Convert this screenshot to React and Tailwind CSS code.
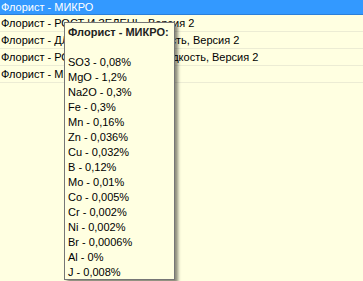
export default function App() {
  const rows = [
    "Флорист - РОСТ И ЗЕЛЕНЬ, Версия 2",
    "Флорист - ДЛЯ ЗЕЛЁНЫХ, жидкость, Версия 2",
    "Флорист - РОЗЫ И ГЕРБЕРЫ, жидкость, Версия 2",
    "Флорист - МИКРО, Версия 2",
  ];
  const items = [
    "SO3 - 0,08%",
    "MgO - 1,2%",
    "Na2O - 0,3%",
    "Fe - 0,3%",
    "Mn - 0,16%",
    "Zn - 0,036%",
    "Cu - 0,032%",
    "B - 0,12%",
    "Mo - 0,01%",
    "Co - 0,005%",
    "Cr - 0,002%",
    "Ni - 0,002%",
    "Br - 0,0006%",
    "Al - 0%",
    "J - 0,008%",
  ];
  return (
    <div
      className="relative w-[363px] h-[281px] overflow-hidden bg-[#ffffe1] text-[11px] text-black"
      style={{ fontFamily: '"Liberation Sans", Arial, sans-serif' }}
    >
      <div className="h-[15px] bg-[#3399ff] border-b border-[#2b7fd9] text-white pl-px leading-[14px] whitespace-nowrap">
        Флорист - МИКРО
      </div>
      {rows.map((r, i) => (
        <div
          key={i}
          className="h-[17px] border-b border-[#ececd4] pl-px leading-[16px] whitespace-nowrap"
        >
          {r}
        </div>
      ))}
      <div className="absolute left-[64px] top-[22px] w-[111px] h-[258px] bg-[#ffffe1] border border-[#767676] shadow-[3px_3px_3px_rgba(0,0,0,0.45)] pl-[3px] pt-[2px] text-[#000] leading-[15px] whitespace-nowrap">
        <div className="font-bold text-[#222]">Флорист - МИКРО:</div>
        <div className="h-[15px]" />
        {items.map((t) => (
          <div key={t}>{t}</div>
        ))}
      </div>
    </div>
  );
}
